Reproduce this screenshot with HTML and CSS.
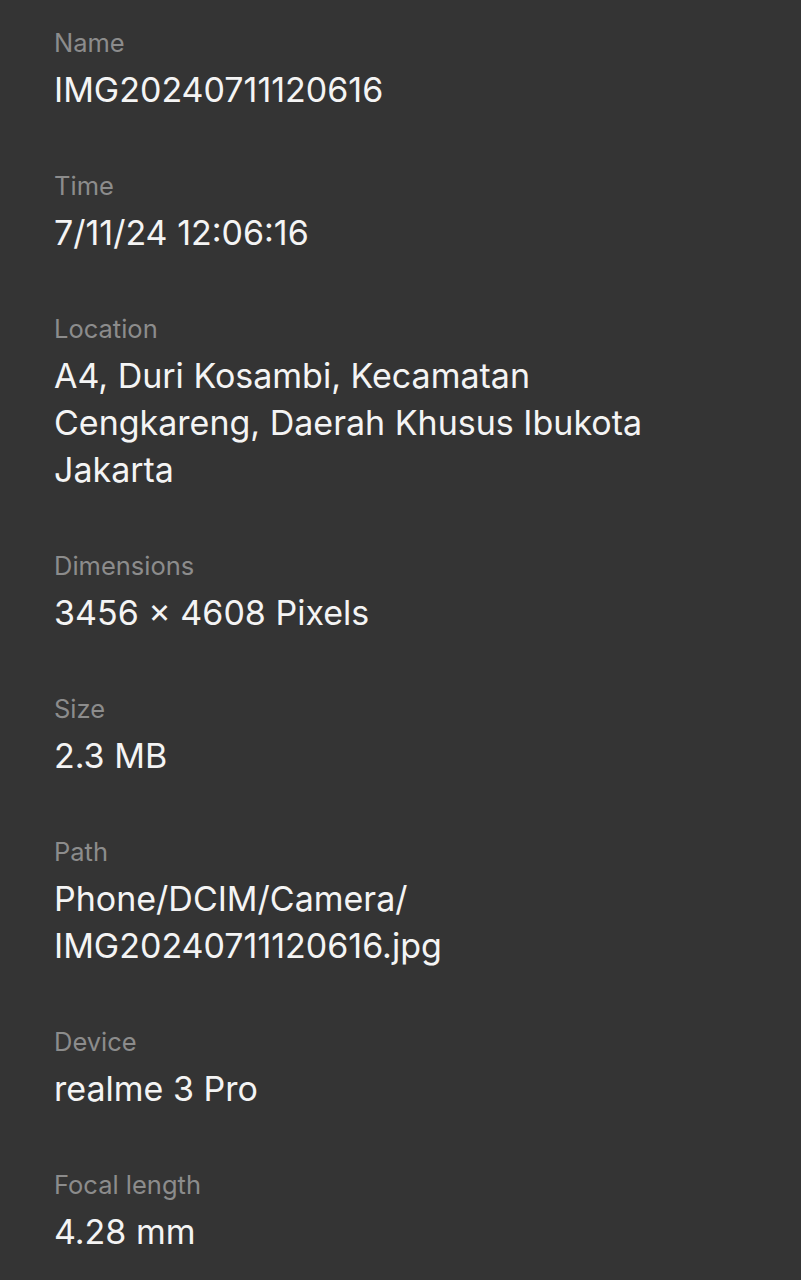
FILE: index.html
```html
<!DOCTYPE html>
<html>
<head>
<meta charset="utf-8">
<link rel="stylesheet" href="styles.css">
</head>
<body>
<main class="details">
  <section class="item">
    <div class="label">Name</div>
    <div class="value">IMG20240711120616</div>
  </section>
  <section class="item">
    <div class="label">Time</div>
    <div class="value">7/11/24 12:06:16</div>
  </section>
  <section class="item">
    <div class="label">Location</div>
    <div class="value">A4, Duri Kosambi, Kecamatan Cengkareng, Daerah Khusus Ibukota Jakarta</div>
  </section>
  <section class="item">
    <div class="label">Dimensions</div>
    <div class="value">3456 × 4608 Pixels</div>
  </section>
  <section class="item">
    <div class="label">Size</div>
    <div class="value">2.3 MB</div>
  </section>
  <section class="item">
    <div class="label">Path</div>
    <div class="value">Phone/DCIM/Camera/<br>IMG20240711120616.jpg</div>
  </section>
  <section class="item">
    <div class="label">Device</div>
    <div class="value">realme 3 Pro</div>
  </section>
  <section class="item">
    <div class="label">Focal length</div>
    <div class="value">4.28 mm</div>
  </section>
</main>
</body>
</html>
```
FILE: styles.css
```css
html, body {
  margin: 0;
  padding: 0;
  background: #343434;
  height: 100%;
}
body {
  font-family: Inter, Roboto, "Noto Sans", sans-serif;
  -webkit-font-smoothing: antialiased;
}
.details {
  display: flex;
  flex-direction: column;
  gap: 56px;
  padding: 26px 120px 0 54px;
}
.item {
  display: flex;
  flex-direction: column;
  gap: 6px;
}
.label {
  font-size: 25.5px;
  line-height: 34px;
  color: #8c8c8c;
}
.value {
  font-size: 34px;
  line-height: 47px;
  color: #f4f4f4;
}
```
